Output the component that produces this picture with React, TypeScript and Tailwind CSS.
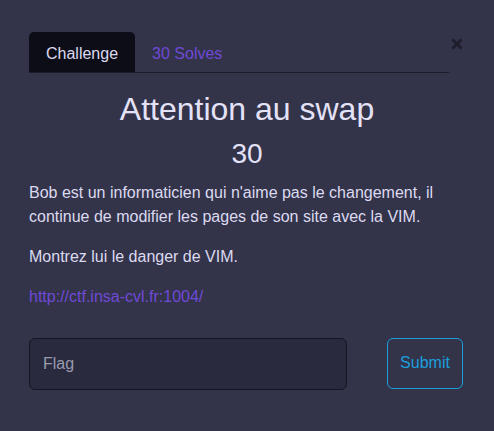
import React from "react";

const font = { fontFamily: '"Liberation Sans", Arial, sans-serif' };

export default function App() {
	return (
		<main
			className="min-h-[431px] w-full bg-[#33334a] px-[29px] pt-[32px]"
			style={font}
		>
			<div className="flex flex-row items-start">
				<ul className="flex flex-1 flex-row border-b border-[#1c1c2b]">
					<li className="rounded-t-[5px] bg-[#0d0d18] px-[17px] pt-[10px] pb-[6px] text-[16px] leading-[24px] text-[#dcdaf0]">
						Challenge
					</li>
					<li className="px-[17px] pt-[10px] pb-[6px] text-[16px] leading-[24px] text-[#6f4ad6]">
						30 Solves
					</li>
				</ul>
				<button className="mt-[2px] flex h-[20px] w-[16px] items-center justify-center text-[#1d1d2c]">
					<svg width="12" height="12" viewBox="0 0 12 12">
						<path
							d="M1.5 1.5 L10.5 10.5 M10.5 1.5 L1.5 10.5"
							stroke="currentColor"
							strokeWidth="2.8"
						/>
					</svg>
				</button>
			</div>

			<h2 className="mt-[17px] text-center text-[32px] leading-[1.2] text-[#e4e2f7]">
				Attention au swap
			</h2>
			<h3 className="mt-[9px] text-center text-[28px] leading-[1.2] text-[#e4e2f7]">
				30
			</h3>

			<div className="mt-[10px] text-[16px] leading-[24px] text-[#dcdaf0]">
				<p className="mb-[16px]">
					Bob est un informaticien qui n'aime pas le changement, il continue de
					modifier les pages de son site avec la VIM.
				</p>
				<p className="mb-[16px]">Montrez lui le danger de VIM.</p>
				<p>
					<a className="text-[#6f4ad6]" href="#">
						http://ctf.insa-cvl.fr:1004/
					</a>
				</p>
			</div>

			<div className="mt-[29px] flex flex-row items-start">
				<input
					className="h-[52px] w-[318px] rounded-[6px] border border-[#15151f] bg-[#292a3e] px-[13px] text-[16px] text-[#dcdaf0] placeholder:text-[#9a9aae] outline-none"
					placeholder="Flag"
					style={font}
				/>
				<button className="ml-[40px] h-[51px] w-[76px] rounded-[6px] border border-[#1a9fdc] text-[16px] text-[#1a9fdc]">
					Submit
				</button>
			</div>
		</main>
	);
}
